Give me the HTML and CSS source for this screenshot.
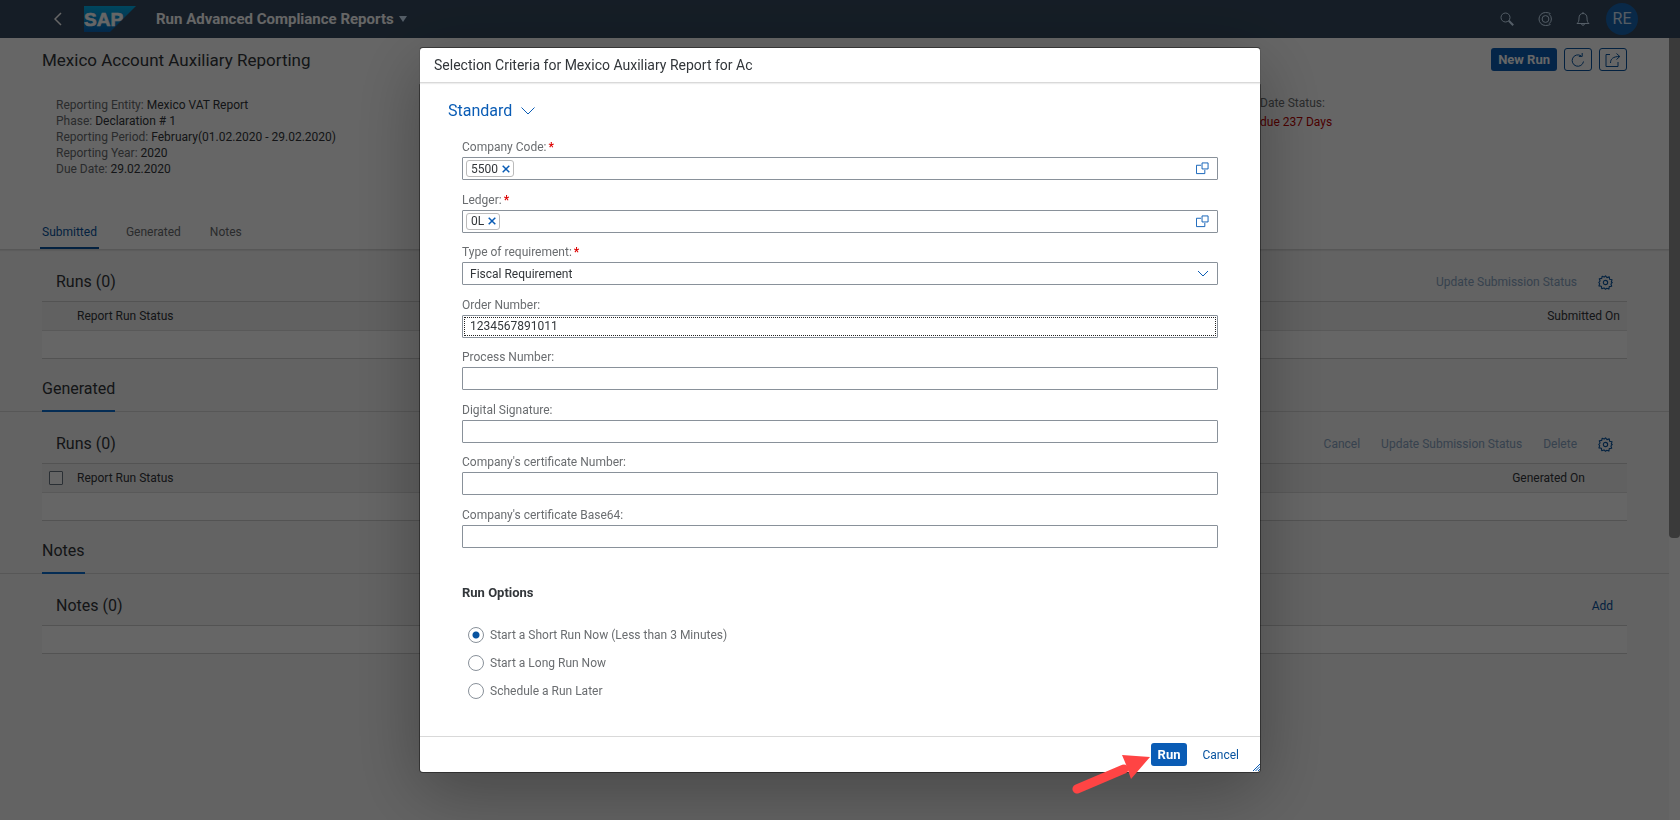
FILE: index.html
```html
<!DOCTYPE html>
<html lang="en">
<head>
<meta charset="utf-8">
<title>Run Advanced Compliance Reports</title>
<link rel="stylesheet" href="styles.css">
</head>
<body>
<svg class="defs" aria-hidden="true">
  <symbol id="gear" viewBox="0 0 16 16"><path d="M8 1l1.600 1.800 2.400-.8.400 2.600 2.600.4-.8 2.400L15.200 8l-1.400 1.600.8 2.400-2.600.4-.4 2.600-2.400-.8L8 15.200l-1.600-1.400-2.400.8-.4-2.600-2.600-.4.8-2.400L.8 8l1.400-1.600L1.400 4 4 3.600 4.400 1.400l2.200.8z" stroke-linejoin="round"/><circle cx="8" cy="8" r="2.300"/></symbol>
  <symbol id="valuehelp" viewBox="0 0 14 14"><path d="M5.500 3.500h-5v9h9v-4"/><path d="M6.500 1h6.500v6.500H6.500z"/></symbol>
</svg>
<div class="app">
  <header class="shell">
    <button class="shell-btn back" aria-label="Back"><svg viewBox="0 0 8 14"><path d="M7 1L1 7l6 6"/></svg></button>
    <svg class="logo" viewBox="0 0 52 26" role="img" aria-label="SAP">
      <defs><linearGradient id="lg" x1="0" y1="0" x2="0" y2="1"><stop offset="0" stop-color="#00b1eb"/><stop offset="1" stop-color="#0a66b8"/></linearGradient></defs>
      <path d="M0 0h52L26 26H0z" fill="url(#lg)"/>
      <text x="0" y="20" class="logo-text">SAP</text>
    </svg>
    <button class="app-title">Run Advanced Compliance Reports<svg viewBox="0 0 8 6"><path d="M0 0h8L4 6z"/></svg></button>
    <div class="shell-end">
      <button class="shell-btn" aria-label="Search"><svg viewBox="0 0 14 14"><circle cx="5.500" cy="5.500" r="4.500"/><path d="M8.800 8.800l4.400 4.400" class="thick"/></svg></button>
      <button class="shell-btn" aria-label="CoPilot"><svg viewBox="0 0 14 14"><path d="M12.500 1.600C11 .8 9.500.5 7.500.5a6.500 6.500 0 0 0 0 13c2 0 3.500-.3 5-1.100"/><circle cx="7.500" cy="7" r="3.400"/><path d="M11 2.200a6 6 0 0 1 0 9.600"/></svg></button>
      <button class="shell-btn" aria-label="Notifications"><svg viewBox="0 0 14 14"><path d="M1 11.500h12c-1.500-1.200-2-2.500-2-5.500 0-2.800-1.500-4.500-4-4.500S3 3.200 3 6c0 3-.5 4.300-2 5.500zM7 0v1.500M5.500 12c.3 1.700 2.700 1.700 3 0"/></svg></button>
      <button class="avatar">RE</button>
    </div>
  </header>

  <div class="page">
    <main class="content">
      <section class="object-header">
        <div class="title-row">
          <h1>Mexico Account Auxiliary Reporting</h1>
          <div class="title-actions">
            <button class="btn-emph">New Run</button>
            <button class="btn-icon" aria-label="Refresh"><svg viewBox="0 0 14 14"><path d="M12.500 8.500A5.700 5.700 0 1 1 10 2.800M7.800 3.400h3.400V0"/></svg></button>
            <button class="btn-icon" aria-label="Share"><svg viewBox="0 0 16 14"><path d="M5 1.500H1v12h12V9"/><path d="M5.500 10C5.500 6 8 3.500 14.500 3.500M11.500.5l3.300 3-3.300 3"/></svg></button>
          </div>
        </div>
        <div class="facts">
          <dl>
            <div><dt>Reporting Entity:</dt> <dd>Mexico VAT Report</dd></div>
            <div><dt>Phase:</dt> <dd>Declaration # 1</dd></div>
            <div><dt>Reporting Period:</dt> <dd>February(01.02.2020 - 29.02.2020)</dd></div>
            <div><dt>Reporting Year:</dt> <dd>2020</dd></div>
            <div><dt>Due Date:</dt> <dd>29.02.2020</dd></div>
          </dl>
          <div class="status"><span>Date Status:</span><span class="overdue">due 237 Days</span></div>
        </div>
        <nav class="tabs"><a href="#submitted" class="active">Submitted</a><a href="#generated">Generated</a><a href="#notes">Notes</a></nav>
      </section>

      <section class="block" id="submitted">
        <div class="toolbar"><h3>Runs (0)</h3>
          <button class="link" disabled>Update Submission Status</button>
          <button class="gear" aria-label="Settings"><svg><use href="#gear"/></svg></button></div>
        <table><thead><tr><th class="sel"></th><th>Report Run Status</th><th class="end">Submitted On</th></tr></thead>
          <tbody><tr><td colspan="3"></td></tr></tbody></table>
      </section>

      <div class="section-title"><h2>Generated</h2></div>
      <section class="block" id="generated">
        <div class="toolbar"><h3>Runs (0)</h3>
          <button class="link" disabled>Cancel</button>
          <button class="link" disabled>Update Submission Status</button>
          <button class="link" disabled>Delete</button>
          <button class="gear" aria-label="Settings"><svg><use href="#gear"/></svg></button></div>
        <table><thead><tr><th class="sel"><input type="checkbox" aria-label="Select all"></th><th>Report Run Status</th><th class="end">Generated On</th><th class="nav"></th></tr></thead>
          <tbody><tr><td colspan="4"></td></tr></tbody></table>
      </section>

      <div class="section-title"><h2>Notes</h2></div>
      <section class="block" id="notes">
        <div class="toolbar"><h3>Notes (0)</h3><button class="link">Add</button></div>
        <table class="plain"><tbody><tr><td></td></tr></tbody></table>
      </section>
    </main>
    <div class="scroll"><div class="thumb"></div></div>
  </div>
</div>

<div class="backdrop">
  <div class="dialog" role="dialog" aria-labelledby="dlg-title">
    <header class="dlg-head"><h2 id="dlg-title">Selection Criteria for Mexico Auxiliary Report for Ac</h2></header>
    <div class="dlg-body">
      <button class="variant">Standard<svg viewBox="0 0 14 8"><path d="M.5.5L7 7l6.500-6.500"/></svg></button>
      <div class="fields">
        <div class="field"><label for="cc">Company Code:<em>*</em></label>
          <div class="box"><span class="token">5500<button aria-label="Remove 5500"><svg viewBox="0 0 8 8"><path d="M.7.7l6.600 6.600M7.300.7L.7 7.300"/></svg></button></span><input id="cc" type="text"><button class="help" aria-label="Value help"><svg><use href="#valuehelp"/></svg></button></div></div>
        <div class="field"><label for="ld">Ledger:<em>*</em></label>
          <div class="box"><span class="token">0L<button aria-label="Remove 0L"><svg viewBox="0 0 8 8"><path d="M.7.7l6.600 6.600M7.300.7L.7 7.300"/></svg></button></span><input id="ld" type="text"><button class="help" aria-label="Value help"><svg><use href="#valuehelp"/></svg></button></div></div>
        <div class="field"><label for="ty">Type of requirement:<em>*</em></label>
          <div class="box"><select id="ty"><option>Fiscal Requirement</option></select><svg class="arrow" viewBox="0 0 12 7"><path d="M1 1l5 5 5-5"/></svg></div></div>
        <div class="field"><label for="on">Order Number:</label><div class="box focus"><input id="on" type="text" value="1234567891011"></div></div>
        <div class="field"><label for="pn">Process Number:</label><div class="box"><input id="pn" type="text"></div></div>
        <div class="field"><label for="ds">Digital Signature:</label><div class="box"><input id="ds" type="text"></div></div>
        <div class="field"><label for="cn">Company's certificate Number:</label><div class="box"><input id="cn" type="text"></div></div>
        <div class="field"><label for="cb">Company's certificate Base64:</label><div class="box"><input id="cb" type="text"></div></div>
      </div>
      <fieldset class="options">
        <legend>Run Options</legend>
        <label><input type="radio" name="run" checked>Start a Short Run Now (Less than 3 Minutes)</label>
        <label><input type="radio" name="run">Start a Long Run Now</label>
        <label><input type="radio" name="run">Schedule a Run Later</label>
      </fieldset>
    </div>
    <footer class="dlg-foot"><button class="btn-emph">Run</button><button class="link">Cancel</button></footer>
    <svg class="grip" viewBox="0 0 7 7"><path d="M0 7l7-7M2.500 7L7 2.500M5 7l2-2"/></svg>
    <svg class="pointer" viewBox="0 0 80 40"><path d="M5 34L52 14"/><path class="head" d="M78 2L50 0l4 9.500 5 14.500z"/></svg>
  </div>
</div>
</body>
</html>
```
FILE: styles.css
```css
* { box-sizing: border-box; }
body { margin: 0; font-family: Roboto, "Open Sans", sans-serif; font-size: 12px; line-height: 16px; color: #32363a; background: #f7f7f7; overflow: hidden; }
h1, h2, h3, dl, dd { margin: 0; font-weight: 400; }
button, input, select { font: inherit; color: inherit; border: 0; background: none; padding: 0; }
button { cursor: pointer; }
svg { fill: none; stroke: currentColor; display: block; }
.defs { position: absolute; width: 0; height: 0; }

.app { height: 100vh; display: flex; flex-direction: column; }
.shell { height: 38px; flex: none; background: #354a5f; color: #fff; display: flex; align-items: center; padding: 0 42px; }
.back { width: 32px; }
.shell-btn { display: flex; justify-content: center; color: #d1e8ff; }
.shell-btn svg { width: 14px; height: 14px; }
.back svg { width: 8px; stroke-width: 1.500; color: #fff; }
.thick { stroke-width: 2; }
.logo { width: 52px; height: 26px; margin-left: 10px; stroke: none; }
.logo-text { fill: #fff; stroke: #fff; stroke-width: 0.6; font: 700 19px "Liberation Sans", sans-serif; }
.app-title { display: flex; align-items: center; gap: 5px; margin-left: 20px; font-size: 15px; font-weight: 700; }
.app-title svg { width: 8px; height: 6px; fill: #d1e8ff; stroke: none; }
.shell-end { margin-left: auto; display: flex; align-items: center; gap: 24px; }
.avatar { width: 32px; height: 32px; margin-left: -8px; border-radius: 50%; background: #1866b4; color: #d5e6f7; font-size: 16px; }

.page { flex: 1; min-height: 0; display: flex; }
.content { flex: 1; min-width: 0; overflow: hidden; }
.scroll { width: 11px; background: #fff; }
.thumb { height: 64%; background: #919191; border-radius: 0 0 4px 4px; }
.object-header { background: #fff; padding: 0 42px; border-bottom: 1px solid #d9d9d9; box-shadow: 0 1px 1px #e5e5e5; }
.title-row { display: flex; align-items: center; justify-content: space-between; padding-top: 10px; height: 33px; }
h1 { font-size: 17px; line-height: 24px; }
.title-actions { display: flex; gap: 7px; }
.btn-emph { height: 23px; padding: 0 7px; border-radius: 3px; background: #0a5cb5; color: #fff; font-size: 13px; font-weight: 700; }
.btn-icon { width: 28px; height: 23px; border: 1px solid #0854a0; border-radius: 3px; color: #0854a0; display: flex; align-items: center; justify-content: center; }
.btn-icon svg { width: 16px; height: 14px; }
.facts { display: grid; grid-template-columns: 1218px 1fr; padding: 24px 0 0; height: 141px; }
dl { padding: 2px 0 0 14px; }
dl div { height: 16px; }
dt, .status { color: #6a6d70; }
dt, dd { display: inline; }
.status { display: flex; flex-direction: column; gap: 3px; }
.overdue { color: #b00; }
.tabs { display: flex; gap: 25px; margin-left: -2px; height: 37px; }
.tabs a { padding: 12px 2px 0; color: #6a6d70; text-decoration: none; }
.tabs .active { color: #0854a0; border-bottom: 2px solid #0854a0; }

.block { padding: 12px 42px 0; }
.toolbar { height: 39px; display: flex; align-items: center; gap: 21px; padding: 1px 14px 0; }
h2, h3 { font-size: 16px; line-height: 20px; }
h3 { margin-right: auto; }
.link { color: #0854a0; }
.link:disabled { color: #8aa6c4; }
.gear { color: #0854a0; }
.gear svg { width: 15px; height: 15px; stroke-width: 1.200; }
table { width: 100%; border-collapse: collapse; }
th { height: 29px; font-weight: 400; text-align: left; padding: 0; background: #f2f2f2; border-top: 1px solid #d0d0d0; border-bottom: 1px solid #dedede; }
td { height: 28px; padding: 0; background: #fff; border-bottom: 1px solid #d0d0d0; }
.plain td { border-top: 1px solid #d0d0d0; }
.sel { width: 35px; padding-left: 7px; }
.end { text-align: right; padding-right: 7px; }
.nav { width: 35px; }
input[type=checkbox] { appearance: none; display: block; width: 14px; height: 14px; margin: 0; border: 1px solid #6a7682; border-radius: 1px; background: #fff; }
.section-title { height: 53px; padding: 20px 42px 0; border-bottom: 1px solid #d9d9d9; display: flex; }
.section-title h2 { border-bottom: 2px solid #0a6ed1; height: 33px; }

.backdrop { position: fixed; inset: 0; background: rgba(0, 0, 0, .6); display: flex; align-items: center; justify-content: center; }
.dialog { position: relative; width: 50%; background: #fff; border-radius: 3px; box-shadow: 0 0 0 1px rgba(0, 0, 0, .42), 0 18px 70px rgba(0, 0, 0, .3); }
.dlg-head { height: 35px; padding: 8px 14px; border-bottom: 1px solid #d9d9d9; box-shadow: 0 1px 1px #eee; }
.dlg-head h2 { font-size: 14px; line-height: 18px; }
.dlg-body { padding: 18px 42px 31px; }
.variant { display: flex; align-items: center; gap: 9px; margin-left: -14px; font-size: 16px; line-height: 20px; color: #0a5cb5; }
.variant svg { width: 14px; height: 8px; }
.fields { display: grid; grid-auto-rows: 1fr; height: 420px; margin-top: 18px; }
.field > label { display: block; height: 18px; color: #6a6d70; }
.field em { color: #d00; font-style: normal; font-weight: 700; margin-left: 2px; }
.box { height: 23px; border: 1px solid #89919a; border-radius: 1px; display: flex; align-items: center; }
.box input, .box select { flex: 1; min-width: 0; height: 100%; padding: 0 7px; outline: 0; appearance: none; }
.box.focus { outline: 1px dotted #222; outline-offset: -3px; }
.token { display: flex; align-items: center; gap: 4px; height: 17px; margin-left: 3px; padding: 0 3px 0 4px; border: 1px solid #bbb; border-radius: 3px; }
.token svg { width: 8px; height: 8px; stroke: #0a5cb5; stroke-width: 1.500; }
.help { color: #0a5cb5; margin-right: 8px; }
.help svg { width: 13px; height: 13px; }
.arrow { width: 12px; height: 7px; margin-right: 8px; color: #0a5cb5; }
.options { border: 0; margin: 26px 0 0; padding: 0; display: flex; flex-direction: column; color: #6a6d70; }
.options legend { color: #32363a; font-size: 13px; font-weight: 700; padding: 0; margin-bottom: 20px; }
.options label { height: 28px; display: flex; align-items: center; gap: 6px; padding-left: 6px; }
input[type=radio] { appearance: none; width: 16px; height: 16px; margin: 0; border: 1px solid #89919a; border-radius: 50%; }
input[type=radio]:checked { background: radial-gradient(circle, #0854a0 3px, transparent 4px); }
.dlg-foot { height: 36px; border-top: 1px solid #d9d9d9; display: flex; align-items: center; justify-content: flex-end; gap: 15px; padding-right: 21px; }
.grip { position: absolute; right: 0; bottom: 1px; width: 7px; height: 7px; color: #0a5cb5; }
.pointer { position: absolute; right: 108px; bottom: -23px; width: 80px; height: 40px; stroke: #ff4444; stroke-width: 9; stroke-linecap: round; }
.head { fill: #ff4444; stroke: none; }
```
